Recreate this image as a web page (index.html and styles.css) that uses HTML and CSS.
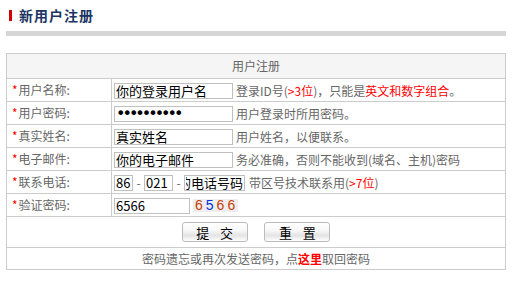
FILE: index.html
```html
<!DOCTYPE html>
<html lang="zh-CN">
<head>
    <meta charset="UTF-8">
    <title>新用户注册</title>
    <link rel="stylesheet" href="styles.css">
</head>
<body>
    <div class="page">
        <div class="page-title"><span class="mark"></span>新用户注册</div>
        <div class="title-line"></div>

        <form id="regForm">
        <table class="reg-table">
            <tr>
                <td colspan="2" class="head">用户注册</td>
            </tr>
            <tr>
                <td class="label"><span class="req">*</span>用户名称:</td>
                <td class="field"><input type="text" class="txt" value="你的登录用户名"><span class="hint">登录ID号(<em>&gt;3位</em>)，只能是<em>英文和数字组合</em>。</span></td>
            </tr>
            <tr>
                <td class="label"><span class="req">*</span>用户密码:</td>
                <td class="field"><input type="password" class="txt" value="123456789a"><span class="hint">用户登录时所用密码。</span></td>
            </tr>
            <tr>
                <td class="label"><span class="req">*</span>真实姓名:</td>
                <td class="field"><input type="text" class="txt" value="真实姓名"><span class="hint">用户姓名，以便联系。</span></td>
            </tr>
            <tr>
                <td class="label"><span class="req">*</span>电子邮件:</td>
                <td class="field"><input type="text" class="txt" value="你的电子邮件"><span class="hint">务必准确，否则不能收到(域名、主机)密码</span></td>
            </tr>
            <tr>
                <td class="label"><span class="req">*</span>联系电话:</td>
                <td class="field"><input type="text" class="txt tel-a" value="86"><span class="dash">-</span><input type="text" class="txt tel-b" value="021"><span class="dash">-</span><input type="text" class="txt tel-c" value="你的电话号码"><span class="hint tel-hint">带区号技术联系用(<em>&gt;7位</em>)</span></td>
            </tr>
            <tr>
                <td class="label"><span class="req">*</span>验证密码:</td>
                <td class="field"><input type="text" class="txt code" value="6566"><span class="captcha"><i class="c1">6</i><i class="c2">5</i><i class="c1">6</i><i class="c1">6</i></span></td>
            </tr>
            <tr>
                <td colspan="2" class="actions">
                    <button type="submit" class="btn">提 交</button>
                    <button type="reset" class="btn">重 置</button>
                </td>
            </tr>
            <tr>
                <td colspan="2" class="foot">密码遗忘或再次发送密码，点<a href="#">这里</a>取回密码</td>
            </tr>
        </table>
        </form>
    </div>
</body>
</html>
```

FILE: styles.css
```css
body {
    margin: 0;
    font-family: "Noto Sans CJK SC", "Liberation Sans", sans-serif;
    font-size: 12px;
    color: #666;
    background: #fff;
}
.page {
    padding: 0 6px;
    width: 500px;
}
.page-title {
    display: flex;
    align-items: center;
    height: 14px;
    padding: 8px 0 0 3px;
    font-size: 14px;
    font-weight: bold;
    color: #1b3564;
    line-height: 14px;
    letter-spacing: 1px;
}
.page-title .mark {
    display: inline-block;
    width: 3px;
    height: 11px;
    margin-right: 7px;
    background-color: #d40000;
}
.title-line {
    height: 5px;
    margin-top: 9px;
    background-color: #d6d6d6;
}
.reg-table {
    width: 500px;
    margin-top: 17px;
    border-collapse: collapse;
    border: 1px solid #cccccc;
}
.reg-table td {
    border: 1px solid #cccccc;
    padding: 0;
    height: 22px;
    line-height: 16px;
    white-space: nowrap;
}
.reg-table .head {
    height: 24px;
    text-align: center;
    background-color: #f5f5f5;
}
.reg-table .label {
    width: 99px;
    padding-left: 5px;
}
.reg-table .req {
    color: #ff0000;
    margin-right: 1px;
}
.reg-table .field {
    padding-left: 2px;
}
.txt {
    box-sizing: border-box;
    width: 119px;
    height: 16px;
    padding: 0 1px;
    margin: 0;
    border: 1px solid #c0c0c0;
    font-family: "Noto Sans CJK SC", "Liberation Sans", sans-serif;
    font-size: 13px;
    line-height: 14px;
    color: #000;
    vertical-align: middle;
    outline: none;
}
input[type="password"].txt {
    font-family: "DejaVu Sans", sans-serif;
    font-size: 16px;
    letter-spacing: -3px;
}
.hint {
    margin-left: 3px;
    vertical-align: middle;
}
.hint em {
    font-style: normal;
    color: #ff0000;
}
.dash {
    display: inline-block;
    width: 11px;
    text-align: center;
    vertical-align: middle;
}
.tel-a {
    width: 19px;
}
.tel-b {
    width: 29px;
}
.tel-c {
    width: 61px;
    text-overflow: clip;
    direction: rtl;
}
.tel-hint {
    margin-left: 4px;
}
.code {
    width: 76px;
}
.captcha {
    display: inline-block;
    margin-left: 3px;
    padding: 0 0 0 2px;
    height: 13px;
    line-height: 13px;
    background-color: #eeeeee;
    font-family: "Liberation Sans", sans-serif;
    font-size: 14px;
    letter-spacing: 3px;
    vertical-align: middle;
}
.captcha i {
    font-style: normal;
}
.captcha .c1 {
    color: #cc3d00;
}
.captcha .c2 {
    color: #0033dd;
}
.reg-table .actions {
    height: 30px;
    text-align: center;
}
.btn {
    width: 66px;
    height: 20px;
    margin: 0 7px;
    padding: 0;
    border: 1px solid #bbbbbb;
    border-radius: 3px;
    background: linear-gradient(#ffffff 0%, #f8f8f8 40%, #e4e4e4 70%, #ffffff 100%);
    font-family: "Noto Sans CJK SC", "Liberation Sans", sans-serif;
    font-size: 13px;
    letter-spacing: 4px;
    text-indent: 4px;
    color: #000;
    cursor: pointer;
}
.reg-table .foot {
    height: 21px;
    text-align: center;
}
.reg-table .foot a {
    color: #ff0000;
    font-weight: bold;
    text-decoration: none;
}
```
